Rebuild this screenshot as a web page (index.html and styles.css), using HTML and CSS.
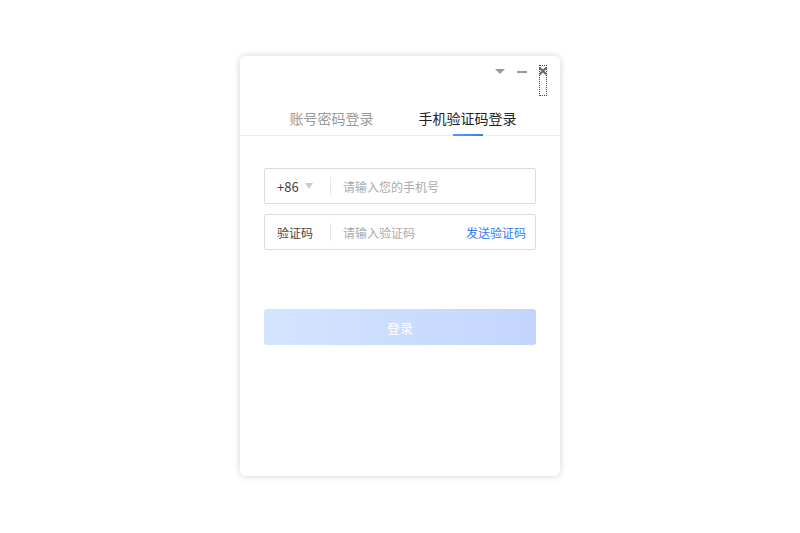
FILE: index.html
```html
<!DOCTYPE html>
<html lang="zh-CN">
<head>
    <meta charset="UTF-8">
    <meta name="viewport" content="width=device-width, initial-scale=1.0">
    <title>登录</title>
    <link rel="stylesheet" href="styles.css">
</head>
<body>
    <div class="window">
        <div class="titlebar">
            <span class="ctrl menu"></span>
            <span class="ctrl min"></span>
            <button class="ctrl close" title="关闭">
                <svg width="10" height="10" viewBox="0 0 10 10"><path d="M1.5 1.5L8.5 8.5M8.5 1.5L1.5 8.5" stroke="#666" stroke-width="2"/></svg>
            </button>
        </div>
        <div class="tabs">
            <div class="tab">账号密码登录</div>
            <div class="tab active">手机验证码登录</div>
        </div>
        <form class="form">
            <div class="field">
                <div class="prefix code">+86 <span class="caret"></span></div>
                <span class="sep"></span>
                <input type="text" placeholder="请输入您的手机号">
            </div>
            <div class="field">
                <div class="prefix">验证码</div>
                <span class="sep"></span>
                <input type="text" placeholder="请输入验证码">
                <a class="send" href="#">发送验证码</a>
            </div>
            <button type="submit" class="submit">登录</button>
        </form>
    </div>
</body>
</html>
```

FILE: styles.css
```css
html, body {
    margin: 0;
    height: 100%;
    background: #fff;
}
body {
    font-family: "Noto Sans CJK SC", "Noto Sans", sans-serif;
    color: #333;
    display: flex;
    justify-content: center;
    padding-top: 56px;
    box-sizing: border-box;
}
.window {
    width: 320px;
    height: 420px;
    background: #fff;
    border-radius: 6px;
    box-shadow: 0 0 7px rgba(0, 0, 0, 0.18);
}
.titlebar {
    height: 30px;
    display: flex;
    justify-content: flex-end;
    align-items: flex-start;
    padding: 10px 14px 0 0;
    box-sizing: border-box;
}
.ctrl {
    display: block;
}
.menu {
    width: 0;
    height: 0;
    border-left: 5px solid transparent;
    border-right: 5px solid transparent;
    border-top: 5px solid #999;
    margin: 3px 12px 0 0;
}
.min {
    width: 10px;
    height: 2px;
    background: #999;
    margin: 5px 13px 0 0;
}
.close {
    width: 6px;
    height: 29px;
    padding: 0;
    border: none;
    background: none;
    outline: 1px dotted #444;
    position: relative;
}
.close svg {
    position: absolute;
    left: -2px;
    top: 0;
}
.tabs {
    display: flex;
    justify-content: center;
    gap: 45px;
    border-bottom: 1px solid #ececec;
    margin-top: 22px;
    padding-left: 6px;
}
.tab {
    font-size: 14px;
    line-height: 20px;
    color: #999;
    padding-bottom: 7px;
    position: relative;
}
.tab.active {
    color: #222;
}
.tab.active::after {
    content: "";
    position: absolute;
    left: 50%;
    bottom: -1px;
    width: 30px;
    height: 2px;
    margin-left: -15px;
    background: linear-gradient(90deg, #4d9bf8, #3f78f6);
}
.form {
    padding: 32px 24px 0;
}
.field {
    height: 36px;
    border: 1px solid #dcdcdc;
    border-radius: 2px;
    display: flex;
    align-items: center;
    margin-bottom: 10px;
    box-sizing: border-box;
    padding: 0 9px 0 12px;
}
.prefix {
    width: 53px;
    font-size: 12px;
    color: #444;
    display: flex;
    align-items: center;
}
.prefix.code {
    font-size: 13px;
}
.caret {
    width: 0;
    height: 0;
    border-left: 4px solid transparent;
    border-right: 4px solid transparent;
    border-top: 6px solid #ccc;
    margin-left: 6px;
}
.sep {
    width: 1px;
    height: 18px;
    background: #e6e6e6;
}
.field input {
    flex: 1;
    min-width: 0;
    border: none;
    outline: none;
    padding: 0 0 0 12px;
    font-family: inherit;
    font-size: 12px;
    background: transparent;
}
.field input::placeholder {
    color: #aaa;
}
.send {
    font-size: 12px;
    color: #3478f6;
    text-decoration: none;
}
.submit {
    display: block;
    width: 100%;
    height: 36px;
    margin-top: 59px;
    border: none;
    border-radius: 3px;
    background: linear-gradient(90deg, #d3e5fe, #c3d5fd);
    color: #fff;
    font-family: inherit;
    font-size: 13px;
    cursor: pointer;
}
```
